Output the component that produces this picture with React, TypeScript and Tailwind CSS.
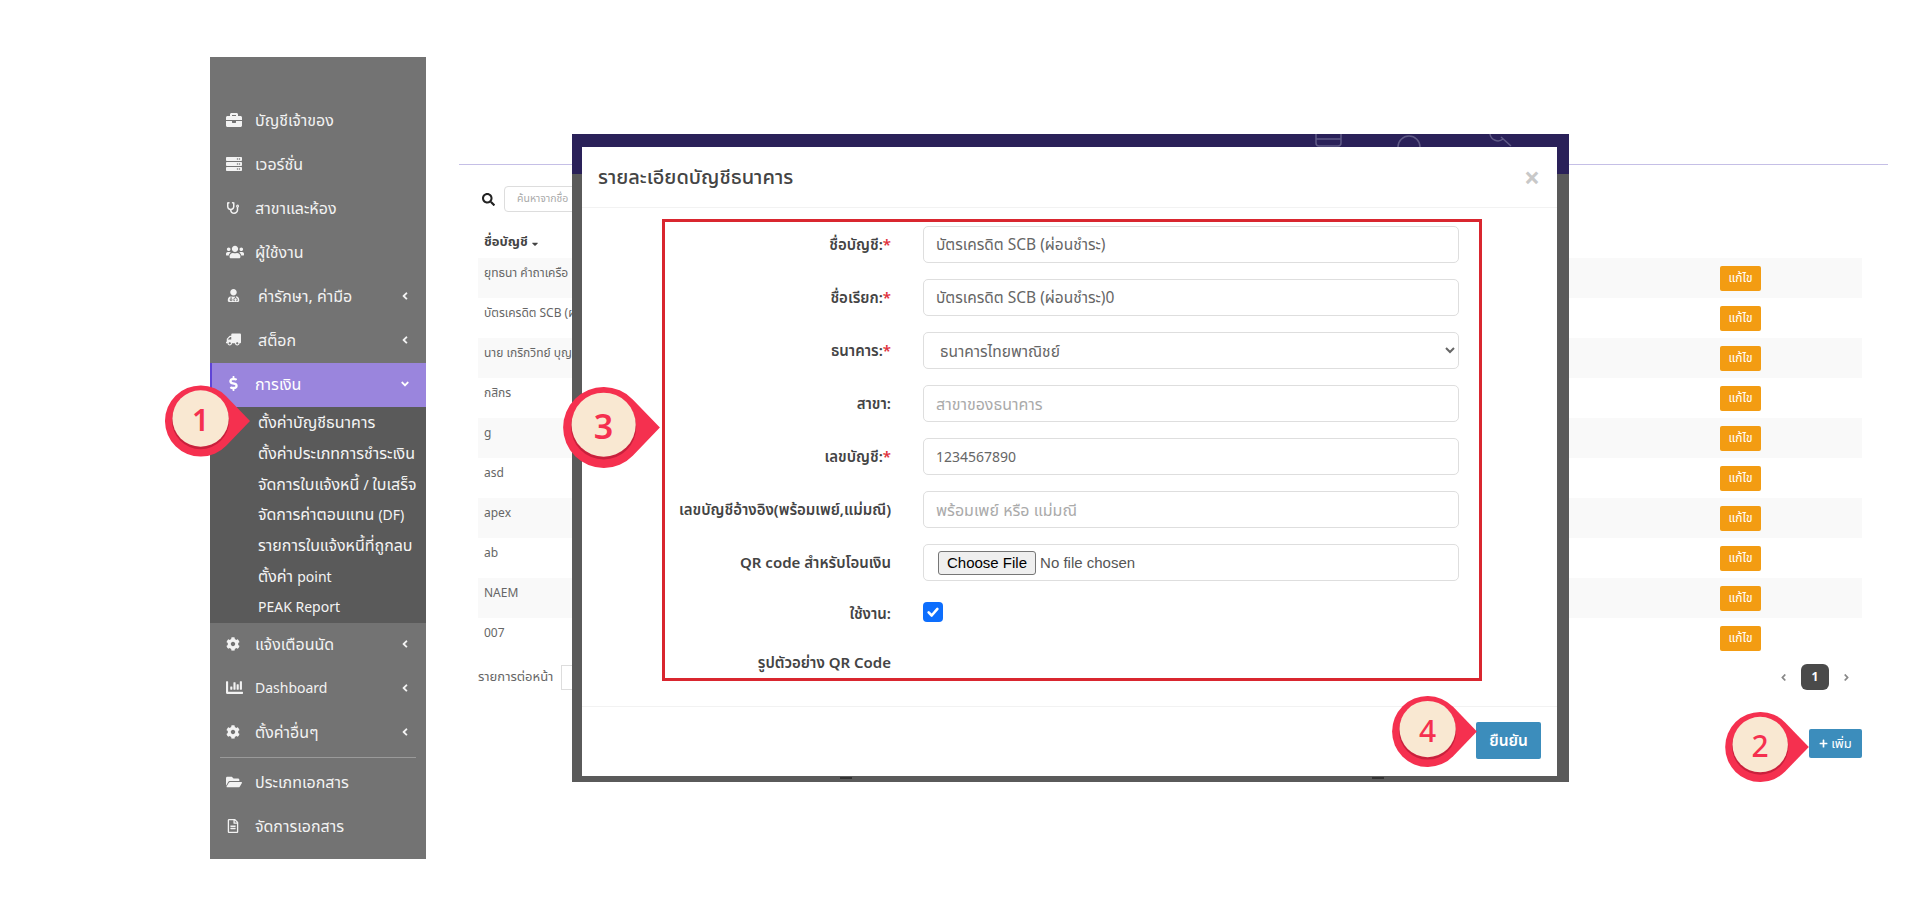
import React from "react";
import {
  FaAngleDown,
  FaAngleLeft,
  FaAngleRight,
  FaBriefcase,
  FaChartBar,
  FaCog,
  FaDollarSign,
  FaFolderOpen,
  FaPlus,
  FaRegFileAlt,
  FaSearch,
  FaServer,
  FaSortDown,
  FaStethoscope,
  FaTruck,
  FaUserMd,
  FaUsers,
} from "react-icons/fa";

const topMenu = [
  { label: "บัญชีเจ้าของ", icon: FaBriefcase, iconClass: "size-[16px]" },
  { label: "เวอร์ชั่น", icon: FaServer, iconClass: "size-[16px]" },
  { label: "สาขาและห้อง", icon: FaStethoscope, iconClass: "size-[12px] ml-[1px]" },
  { label: "ผู้ใช้งาน", icon: FaUsers, iconClass: "size-[18px]" },
  { label: "ค่ารักษา, ค่ามือ", icon: FaUserMd, iconClass: "size-[13px] ml-[1px]", arrow: true, indent: true },
  { label: "สต็อก", icon: FaTruck, iconClass: "size-[15px] -scale-x-100", arrow: true, indent: true },
];

const financeMenu = [
  "ตั้งค่าบัญชีธนาคาร",
  "ตั้งค่าประเภทการชำระเงิน",
  "จัดการใบแจ้งหนี้ / ใบเสร็จ",
  "จัดการค่าตอบแทน (DF)",
  "รายการใบแจ้งหนี้ที่ถูกลบ",
  "ตั้งค่า point",
  "PEAK Report",
];

const lowerMenu = [
  { label: "แจ้งเตือนนัด", icon: FaCog, iconClass: "size-[14px]", arrow: true },
  { label: "Dashboard", icon: FaChartBar, iconClass: "size-[17px]", arrow: true },
  { label: "ตั้งค่าอื่นๆ", icon: FaCog, iconClass: "size-[14px]", arrow: true },
];

const docMenu = [
  { label: "ประเภทเอกสาร", icon: FaFolderOpen, iconClass: "size-[16px]" },
  { label: "จัดการเอกสาร", icon: FaRegFileAlt, iconClass: "size-[14px]" },
];

const accounts = [
  "ยุทธนา คำถาเครือ",
  "บัตรเครดิต SCB (ผ่อนชำระ)",
  "นาย เกริกวิทย์ บุญ",
  "กสิกร",
  "g",
  "asd",
  "apex",
  "ab",
  "NAEM",
  "007",
];

type MenuItem = {
  label: string;
  icon: React.ComponentType<{ className?: string }>;
  iconClass: string;
  arrow?: boolean;
  indent?: boolean;
};

// Thai runs read larger than the latin ones in this menu
function Label({ text }: { text: string }) {
  const parts = text.split(/([\u0E00-\u0E7F][\u0E00-\u0E7F, ]*)/).filter(Boolean);
  return (
    <>
      {parts.map((part, i) =>
        /[\u0E00-\u0E7F]/.test(part) ? (
          <span key={i} className="text-[16px]">
            {part}
          </span>
        ) : (
          <span key={i}>{part}</span>
        )
      )}
    </>
  );
}

function SideItem({ item }: { item: MenuItem }) {
  const Icon = item.icon;
  return (
    <div className="flex h-[44px] items-center pb-[3px] pl-[16px] pr-[15px] text-[14px] text-[#f2f2f2]">
      <span className="flex w-[29px] shrink-0 items-center">
        <Icon className={item.iconClass} />
      </span>
      <span className={item.indent ? "ml-[3px] flex-1" : "flex-1"}>
        <Label text={item.label} />
      </span>
      {item.arrow && <FaAngleLeft className="size-[12px]" />}
    </div>
  );
}

function Sidebar() {
  return (
    <aside className="h-[802px] w-[216px] shrink-0 bg-[#737373] pt-[42px]">
      {topMenu.map((item) => (
        <SideItem key={item.label} item={item} />
      ))}
      <div className="flex h-[44px] items-center border-l-2 border-[#5f45d6] bg-[#9a85dd] pb-[3px] pl-[14px] pr-[15px] text-[14px] text-white">
        <span className="flex w-[29px] shrink-0 items-center">
          <FaDollarSign className="size-[15px]" />
        </span>
        <span className="flex-1">
          <Label text="การเงิน" />
        </span>
        <FaAngleDown className="size-[12px]" />
      </div>
      <div className="flex h-[216px] flex-col bg-[#5a5a5a] pl-[48px] text-[14px] text-[#f4f4f4]">
        {financeMenu.map((label) => (
          <div key={label} className="flex h-[30.7px] items-center whitespace-nowrap">
            <span>
              <Label text={label} />
            </span>
          </div>
        ))}
      </div>
      {lowerMenu.map((item) => (
        <SideItem key={item.label} item={item} />
      ))}
      <div className="mx-[10px] mb-[3px] mt-[2px] h-px bg-[#9a9a9a]" />
      {docMenu.map((item) => (
        <SideItem key={item.label} item={item} />
      ))}
    </aside>
  );
}

function AccountList() {
  return (
    <main className="flex-1 pt-[107px] text-[12px] text-[#666]">
      <div className="ml-[33px] mr-[32px] h-px bg-[#c5bfe6]" />
      <div className="ml-[52px] mr-[58px] mt-[21px]">
        <div className="flex h-[26px] items-center">
          <FaSearch className="ml-[4px] size-[13px] text-[#222]" />
          <div className="ml-[9px] flex h-[26px] w-[200px] items-center rounded-[4px] border border-[#ddd] pl-[12px] text-[10.5px] text-[#aaa]">
            ค้นหาจากชื่อ
          </div>
        </div>
        <div className="flex h-[46px] items-center pl-[6px] pt-[14px] text-[13px] font-bold text-[#444]">
          ชื่อบัญชี
          <FaSortDown className="ml-[2px] size-[10px]" />
        </div>
        {accounts.map((name, i) => (
          <div
            key={name}
            className={
              i % 2 === 0
                ? "flex h-[40px] items-center justify-between bg-[#f9f9f9] pl-[6px] pr-[101px]"
                : "flex h-[40px] items-center justify-between pl-[6px] pr-[101px]"
            }
          >
            <span className="pb-[10px]">{name}</span>
            <button className="h-[25px] w-[41px] rounded-[2px] bg-[#f39c12] text-[12px] text-white">
              แก้ไข
            </button>
          </div>
        ))}
        <div className="mt-[6px] flex h-[26px] items-center justify-between">
          <div className="flex items-center text-[13px]">
            รายการต่อหน้า
            <div className="ml-[8px] h-[25px] w-[60px] border border-[#ddd]" />
          </div>
          <div className="flex items-center pr-[10px] text-[#888]">
            <FaAngleLeft className="size-[11px]" />
            <span className="mx-[12px] flex h-[26px] w-[28px] items-center justify-center rounded-[6px] bg-[#4a4a4a] font-bold text-white">
              1
            </span>
            <FaAngleRight className="size-[11px]" />
          </div>
        </div>
        <div className="mt-[39px] flex justify-end">
          <button className="flex h-[29px] w-[53px] items-center justify-center gap-[3px] rounded-[2px] bg-[#3c8dbc] text-[13px] text-white">
            <FaPlus className="size-[9px]" />
            เพิ่ม
          </button>
        </div>
      </div>
    </main>
  );
}

const fieldClass =
  "h-[37px] w-[536px] rounded-[5px] border border-[#dedede] bg-white px-[12px] text-[#666] placeholder:text-[16px] placeholder:text-[#aaa]";

function Field({ label, required, children }: { label: string; required?: boolean; children: React.ReactNode }) {
  return (
    <div className="flex h-[37px] items-center">
      <label className="w-[226px] shrink-0 whitespace-nowrap text-right text-[15px] font-semibold text-[#444]">
        {label}
        {required && <span className="text-[#e0303c]">*</span>}
      </label>
      <div className="ml-[32px]">{children}</div>
    </div>
  );
}

function BankModal() {
  return (
    <div className="absolute left-[572px] top-[134px] h-[648px] w-[997px] bg-[linear-gradient(#2a2159_40px,#5a5a5a_40px)] pl-[10px] pt-[13px]">
      {/* icons of the page behind, cut by the modal */}
      <svg className="absolute left-[743px] top-0 h-[13px] w-[200px] text-[#5f5a86]" viewBox="0 0 200 13" fill="none" stroke="currentColor" strokeWidth="1.5">
        <path d="M1 0v9a3 3 0 0 0 3 3h19a3 3 0 0 0 3-3V0M1 5h25" />
        <path d="M83 13a11 11 0 0 1 22 0" />
        <path d="M175 0a8 8 0 0 0 13 5M186 3l10 9" />
      </svg>
      <div className="flex h-[629px] w-[975px] flex-col bg-white">
        <div className="flex h-[61px] shrink-0 items-center justify-between border-b border-[#f2f2f2] pl-[16px] pr-[17px]">
          <h2 className="text-[20px] font-medium text-[#444]">รายละเอียดบัญชีธนาคาร</h2>
          <span className="text-[28px] font-bold leading-none text-[#c8c8c8]">×</span>
        </div>
        <div className="h-[498px] shrink-0 pl-[80px] pt-[11px]">
          <div className="flex h-[462px] w-[820px] flex-col gap-[16px] border-[3px] border-[#d9262f] pt-[4px]">
            <Field label="ชื่อบัญชี:" required>
              <input className={fieldClass + " text-[15.5px]"} defaultValue="บัตรเครดิต SCB (ผ่อนชำระ)" />
            </Field>
            <Field label="ชื่อเรียก:" required>
              <input className={fieldClass + " text-[15.5px]"} defaultValue="บัตรเครดิต SCB (ผ่อนชำระ)0" />
            </Field>
            <Field label="ธนาคาร:" required>
              <select className={fieldClass + " text-[15.5px]"} defaultValue="scb">
                <option value="scb">ธนาคารไทยพาณิชย์</option>
              </select>
            </Field>
            <Field label="สาขา:">
              <input className={fieldClass + " text-[15.5px]"} placeholder="สาขาของธนาคาร" />
            </Field>
            <Field label="เลขบัญชี:" required>
              <input className={fieldClass + " text-[14px]"} defaultValue="1234567890" />
            </Field>
            <Field label="เลขบัญชีอ้างอิง(พร้อมเพย์,แม่มณี)">
              <input className={fieldClass + " text-[15.5px]"} placeholder="พร้อมเพย์ หรือ แม่มณี" />
            </Field>
            <Field label="QR code สำหรับโอนเงิน">
              <div className="flex h-[37px] w-[536px] items-center rounded-[5px] border border-[#dedede] pl-[14px]">
                <input
                  type="file"
                  className="font-['Liberation_Sans',sans-serif] text-[15px] text-[#555] file:mr-[4px] file:h-[24px] file:rounded-[3px] file:border file:border-[#767676] file:bg-[#efefef] file:px-[8px] file:text-black"
                />
              </div>
            </Field>
            <Field label="ใช้งาน:">
              <span className="relative mb-[3px] flex size-[20px] items-center justify-center">
                <input type="checkbox" defaultChecked className="size-[20px] appearance-none rounded-[4px] bg-[#0d6efd]" />
                <svg className="absolute size-[14px] text-white" viewBox="0 0 16 16" fill="none" stroke="currentColor" strokeWidth="3" strokeLinecap="round" strokeLinejoin="round">
                  <path d="M3 8.5l3.5 3.5L13 4.5" />
                </svg>
              </span>
            </Field>
            <Field label="รูปตัวอย่าง QR Code">
              <span />
            </Field>
          </div>
        </div>
        <div className="flex flex-1 justify-end border-t border-[#f2f2f2] pr-[16px] pt-[15px]">
          <button className="h-[37px] w-[65px] rounded-[2px] bg-[#3c8dbc] text-[15.5px] font-semibold text-white">
            ยืนยัน
          </button>
        </div>
      </div>
      {/* table footer text showing under the modal edge */}
      <span className="absolute bottom-[3px] left-[268px] h-[2px] w-[12px] bg-[#333]" />
      <span className="absolute bottom-[3px] left-[800px] h-[2px] w-[12px] bg-[#333]" />
    </div>
  );
}

function Pin({ n, className, numberClass }: { n: number; className: string; numberClass: string }) {
  return (
    <div className={"absolute " + className}>
      <svg className="size-full" viewBox="0 0 86 72">
        <path d="M86 36L61.9 11A36 36 0 1 0 61.9 61Z" fill="#f5304f" />
        <circle cx="36" cy="35.5" r="29" fill="#c9203c" />
        <circle cx="36" cy="33.5" r="28.5" fill="#f9e8d2" />
      </svg>
      <span className={"absolute inset-y-0 left-0 flex w-[83.7%] items-center justify-center pb-[3px] text-[#f5304f] " + numberClass}>
        {n}
      </span>
    </div>
  );
}

export default function App() {
  return (
    <div className="relative h-[916px] w-full overflow-hidden bg-white font-['Noto_Sans','Noto_Sans_Thai',sans-serif]">
      <div className="flex pl-[210px] pt-[57px]">
        <Sidebar />
        <AccountList />
      </div>
      <BankModal />
      <Pin n={1} className="left-[165px] top-[385px] h-[72px] w-[85px]" numberClass="text-[30px] font-semibold" />
      <Pin n={3} className="left-[563px] top-[387px] h-[81px] w-[97px]" numberClass="text-[34px] font-semibold" />
      <Pin n={2} className="left-[1725px] top-[712px] h-[70px] w-[84px]" numberClass="text-[30px] font-medium" />
      <Pin n={4} className="left-[1392px] top-[696px] h-[71px] w-[85px]" numberClass="text-[30px] font-medium" />
    </div>
  );
}
